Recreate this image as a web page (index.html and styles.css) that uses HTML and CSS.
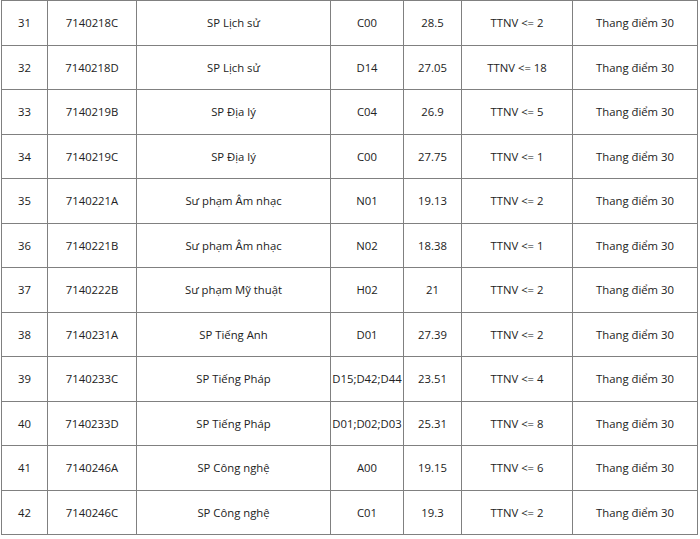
FILE: index.html
```html
<!DOCTYPE html>
<html lang="vi">
<head>
<meta charset="utf-8">
<link rel="stylesheet" href="styles.css">
</head>
<body>
<table class="scores">
  <colgroup>
    <col class="c1"><col class="c2"><col class="c3"><col class="c4"><col class="c5"><col class="c6"><col class="c7">
  </colgroup>
  <tbody>
    <tr><td>31</td><td>7140218C</td><td>SP Lịch sử</td><td>C00</td><td>28.5</td><td>TTNV &lt;= 2</td><td>Thang điểm 30</td></tr>
    <tr><td>32</td><td>7140218D</td><td>SP Lịch sử</td><td>D14</td><td>27.05</td><td>TTNV &lt;= 18</td><td>Thang điểm 30</td></tr>
    <tr><td>33</td><td>7140219B</td><td>SP Địa lý</td><td>C04</td><td>26.9</td><td>TTNV &lt;= 5</td><td>Thang điểm 30</td></tr>
    <tr><td>34</td><td>7140219C</td><td>SP Địa lý</td><td>C00</td><td>27.75</td><td>TTNV &lt;= 1</td><td>Thang điểm 30</td></tr>
    <tr><td>35</td><td>7140221A</td><td>Sư phạm Âm nhạc</td><td>N01</td><td>19.13</td><td>TTNV &lt;= 2</td><td>Thang điểm 30</td></tr>
    <tr><td>36</td><td>7140221B</td><td>Sư phạm Âm nhạc</td><td>N02</td><td>18.38</td><td>TTNV &lt;= 1</td><td>Thang điểm 30</td></tr>
    <tr><td>37</td><td>7140222B</td><td>Sư phạm Mỹ thuật</td><td>H02</td><td>21</td><td>TTNV &lt;= 2</td><td>Thang điểm 30</td></tr>
    <tr><td>38</td><td>7140231A</td><td>SP Tiếng Anh</td><td>D01</td><td>27.39</td><td>TTNV &lt;= 2</td><td>Thang điểm 30</td></tr>
    <tr><td>39</td><td>7140233C</td><td>SP Tiếng Pháp</td><td>D15;D42;D44</td><td>23.51</td><td>TTNV &lt;= 4</td><td>Thang điểm 30</td></tr>
    <tr><td>40</td><td>7140233D</td><td>SP Tiếng Pháp</td><td>D01;D02;D03</td><td>25.31</td><td>TTNV &lt;= 8</td><td>Thang điểm 30</td></tr>
    <tr><td>41</td><td>7140246A</td><td>SP Công nghệ</td><td>A00</td><td>19.15</td><td>TTNV &lt;= 6</td><td>Thang điểm 30</td></tr>
    <tr><td>42</td><td>7140246C</td><td>SP Công nghệ</td><td>C01</td><td>19.3</td><td>TTNV &lt;= 2</td><td>Thang điểm 30</td></tr>
  </tbody>
</table>
</body>
</html>
```
FILE: styles.css
```css
html, body {
  margin: 0;
  padding: 0;
  background: #ffffff;
}
body {
  font-family: "Open Sans", "Noto Sans", sans-serif;
  font-size: 11.3px;
  color: #222222;
}
.scores {
  border-collapse: collapse;
  table-layout: fixed;
  width: 697px;
  margin-left: 1px;
}
.scores td {
  border: 1px solid #808080;
  text-align: center;
  vertical-align: middle;
  padding: 0;
  height: 43.5px;
  white-space: nowrap;
}
.c1 { width: 46px; }
.c2 { width: 89px; }
.c3 { width: 194px; }
.c4 { width: 73px; }
.c5 { width: 58px; }
.c6 { width: 111px; }
.c7 { width: 125px; }
```
